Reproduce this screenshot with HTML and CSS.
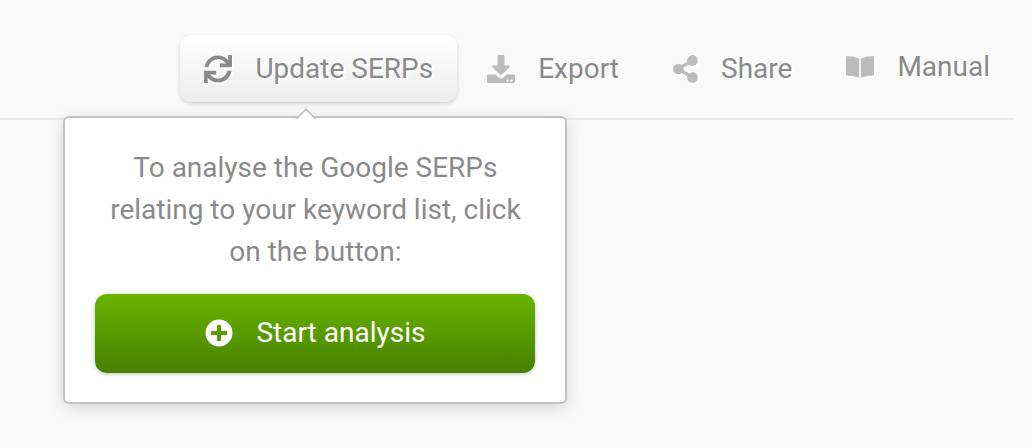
FILE: index.html
```
<!DOCTYPE html>
<html lang="en">
<head>
    <meta charset="UTF-8">
    <meta name="viewport" content="width=device-width, initial-scale=1.0">
    <title>Keyword list</title>
    <link rel="stylesheet" href="styles.css">
</head>
<body>
<nav class="toolbar">
    <div class="dropdown">
        <button type="button" class="tool active" aria-expanded="true" aria-controls="update-popover">
            <svg class="icon" width="28" height="28" viewBox="0 0 512 512" aria-hidden="true">
                <path d="M440.65 12.57l4 82.77A247.16 247.16 0 0 0 255.83 8C134.73 8 33.91 94.92 12.29 209.82A12 12 0 0 0 24.09 224h49.05a12 12 0 0 0 11.67-9.26 175.91 175.91 0 0 1 317-56.94l-101.46-4.86a12 12 0 0 0-12.57 12v47.41a12 12 0 0 0 12 12H500a12 12 0 0 0 12-12V12a12 12 0 0 0-12-12h-47.37a12 12 0 0 0-11.98 12.57zM255.83 432a175.61 175.61 0 0 1-146-77.8l101.8 4.87a12 12 0 0 0 12.57-12v-47.4a12 12 0 0 0-12-12H12a12 12 0 0 0-12 12V500a12 12 0 0 0 12 12h47.35a12 12 0 0 0 12-12.6l-4.15-82.57A247.17 247.17 0 0 0 255.83 504c121.11 0 221.93-86.92 243.55-201.82a12 12 0 0 0-11.8-14.18h-49.05a12 12 0 0 0-11.67 9.26A175.86 175.86 0 0 1 255.83 432z"/>
            </svg>
            <span>Update SERPs</span>
        </button>
        <div class="popover" id="update-popover">
            <p>To analyse the Google SERPs relating to your keyword list, click on the button:</p>
            <button type="button" class="start">
                <svg width="28" height="28" viewBox="0 0 28 28" aria-hidden="true">
                    <path fill-rule="evenodd" d="M14 .5a13.5 13.5 0 1 0 0 27a13.5 13.5 0 1 0 0-27zM12 6h4v6h6v4h-6v6h-4v-6H6v-4h6z"/>
                </svg>
                <span>Start analysis</span>
            </button>
        </div>
    </div>
    <button type="button" class="tool">
        <svg class="icon" width="28" height="28" viewBox="0 0 28 28" aria-hidden="true">
            <path d="M11.8 0h4.4q1.3 0 1.3 1.3V10.5h4.8q1.5 0 .5 1.2l-8 8q-.8.7-1.6 0l-8-8q-1-1.2.5-1.2h4.8V1.3Q10.5 0 11.8 0z"/>
            <path fill-rule="evenodd" d="M1.3 19.5h7.2l2.7 2.7q2.8 2.5 5.6 0l2.7-2.7h7.2q1.3 0 1.3 1.3v5.9q0 1.3-1.3 1.3H1.3Q0 28 0 26.7v-5.9q0-1.3 1.3-1.3zM20.5 24.3a1.2 1.2 0 1 0 0 2.4a1.2 1.2 0 1 0 0-2.4zM24.3 24.3a1.2 1.2 0 1 0 0 2.4a1.2 1.2 0 1 0 0-2.4z"/>
        </svg>
        <span>Export</span>
    </button>
    <button type="button" class="tool">
        <svg class="icon" width="25" height="28" viewBox="0 0 25 28" aria-hidden="true">
            <path d="M19.5 5.4L5.3 14l14.2 8.6" fill="none" stroke="currentColor" stroke-width="3.5"/>
            <circle cx="19.5" cy="5.4" r="5.3"/>
            <circle cx="5.3" cy="14" r="5.3"/>
            <circle cx="19.5" cy="22.6" r="5.3"/>
        </svg>
        <span>Share</span>
    </button>
    <a class="tool manual" href="#manual">
        <svg class="icon" width="28" height="22" viewBox="0 0 28 22" aria-hidden="true">
            <path d="M1.2 0Q8 .2 12.7 2.6q.5.3.5.8v17.7q0 .9-.9.5Q8 19.7 1.1 19.4 0 19.3 0 18.3V1.1Q0 0 1.2 0zM26.8 0Q20 .2 15.3 2.6q-.5.3-.5.8v17.7q0 .9.9.5 4.3-1.9 11.2-2.2 1.1-.1 1.1-1.1V1.1Q28 0 26.8 0z"/>
        </svg>
        <span>Manual</span>
    </a>
</nav>
</body>
</html>
```
FILE: styles.css
```
* {
    box-sizing: border-box;
}

body {
    min-height: 100vh;
    margin: 0;
    background: #f9f9f9;
    color: #8a8a8a;
    font-family: Roboto, "Liberation Sans", sans-serif;
    font-size: 28px;
}

button {
    font: inherit;
    border: 0;
    cursor: pointer;
}

.toolbar {
    display: flex;
    justify-content: flex-end;
    align-items: flex-start;
    gap: 6px;
    margin-right: 18px;
    padding: 35px 0 16px;
    border-bottom: 2px solid #e9e9e9;
}

.tool {
    display: flex;
    align-items: center;
    gap: 23px;
    height: 67px;
    padding: 0 24px;
    border-radius: 12px;
    background: none;
    color: #8a8a8a;
    line-height: 42px;
    text-decoration: none;
    text-shadow: 2px 2px 0 #fff;
    white-space: nowrap;
}

.icon {
    color: #bbb;
    filter: drop-shadow(2px 2px 0 #fff);
}

svg {
    flex: none;
    fill: currentColor;
}

.tool.active {
    background: linear-gradient(#fff, #ececec);
    box-shadow: 0 2px 4px rgba(0, 0, 0, 0.16);
}

.active .icon {
    color: #8a8a8a;
}

.manual {
    height: 64px;
}

.dropdown {
    position: relative;
}

.popover {
    position: absolute;
    top: 81px;
    left: -117px;
    width: 504px;
    padding: 29px 30px;
    background: #fff;
    border: 2px solid #c2c2c2;
    border-radius: 6px;
    box-shadow: 0 4px 16px rgba(0, 0, 0, 0.14);
    text-align: center;
}

/* arrow pointing at the open tool */
.popover::before {
    content: '';
    position: absolute;
    top: -7px;
    left: 233px;
    width: 14px;
    height: 14px;
    background: #fff;
    border: solid #c2c2c2;
    border-width: 2px 0 0 2px;
    transform: rotate(45deg);
    clip-path: polygon(0 0, 100% 0, 0 100%);
}

.popover p {
    margin: 0 0 21px;
    line-height: 42px;
}

.start {
    display: flex;
    justify-content: center;
    align-items: center;
    gap: 23px;
    width: 100%;
    height: 79px;
    padding: 0 0 2px;
    border-radius: 12px;
    background: linear-gradient(#69b400, #478000);
    box-shadow: 0 1px 4px rgba(0, 0, 0, 0.25);
    color: #fff;
}
```
